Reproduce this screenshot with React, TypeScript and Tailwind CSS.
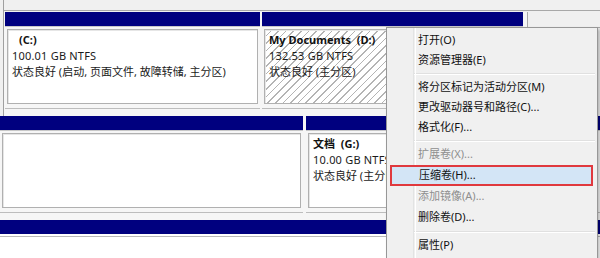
import React from 'react';

type Part = {
  width: string;
  label?: string;
  size?: string;
  status?: string;
  hatched?: boolean;
  labelIndent?: string;
};

function Partition({ width, label, size, status, hatched, labelIndent }: Part) {
  return (
    <div className={`${width} flex flex-col shrink-0`}>
      <div className="h-[14px] bg-[#00007f] border-b border-[#c8c8c8] box-content" />
      <div
        className={`mt-[2px] mx-[2px] h-[75px] border border-[#b0b0b0] shadow-[inset_1px_1px_0_#e6e6e6] pt-[2px] pl-[4px] leading-[16px] whitespace-pre overflow-hidden ${
          hatched
            ? 'bg-[repeating-linear-gradient(135deg,#ffffff_0px,#ffffff_4.3px,#b4b4b4_4.3px,#b4b4b4_5.4px)]'
            : 'bg-white'
        }`}
      >
        {label && <div className={`font-bold text-[#111] ${labelIndent ?? ''}`}>{label}</div>}
        {size && <div className="text-[#1a1a1a] tracking-[0.2px]">{size}</div>}
        {status && <div className="text-[#1a1a1a]">{status}</div>}
      </div>
      <div className="h-[4px]" />
      <div className="border-t border-[#bdbdbd]" />
    </div>
  );
}

const items: ({ text: string; disabled?: boolean; active?: boolean; h?: string } | 'sep')[] = [
  { text: '打开(O)' },
  { text: '资源管理器(E)' },
  'sep',
  { text: '将分区标记为活动分区(M)' },
  { text: '更改驱动器号和路径(C)...' },
  { text: '格式化(F)...' },
  'sep',
  { text: '扩展卷(X)...', disabled: true, h: 'h-[21px]' },
  { text: '压缩卷(H)...', active: true, h: 'h-[21px]' },
  { text: '添加镜像(A)...', disabled: true, h: 'h-[21px]' },
  { text: '删除卷(D)...', h: 'h-[21px]' },
  'sep',
  { text: '属性(P)' },
];

export default function App() {
  return (
    <div className="relative w-[600px] h-[258px] overflow-hidden bg-white text-[11px] font-['Noto_Sans','Noto_Sans_CJK_SC',sans-serif]">
      {/* top strip */}
      <div className="h-[12px] bg-[#f0f0f0] flex">
        <div className="w-[4px] border-r border-[#a0a0a0]" />
        <div className="flex-1 border-b border-[#a8a8a8] mb-[1px]" />
      </div>

      {/* disk row 1 */}
      <div className="h-[104px] flex bg-[#f6f6f6]">
        <div className="w-[4px] bg-[#f0f0f0] border-r border-[#a0a0a0] shrink-0" />
        <div className="w-[1px] shrink-0" />
        <Partition
          width="w-[255px]"
          label="(C:)"
          labelIndent="ml-[7px]"
          size="100.01 GB NTFS"
          status="状态良好 (启动, 页面文件, 故障转储, 主分区)"
        />
        <div className="w-[2px] shrink-0" />
        <Partition
          width="w-[261px]"
          label="My Documents  (D:)"
          size="132.53 GB NTFS"
          status="状态良好 (主分区)"
          hatched
        />
        <div className="flex-1 bg-[#f0f0f0] ml-[4px] border-l border-[#a8a8a8]">
          <div className="h-[16px] border-b border-[#a8a8a8]" />
        </div>
      </div>

      {/* disk row 2 */}
      <div className="h-[104px] flex bg-[#f6f6f6]">
        <Partition width="w-[303px]" />
        <div className="w-[3px] shrink-0" />
        <div className="flex-1 flex">
          <Partition
            width="w-full"
            label="文档  (G:)"
            size="10.00 GB NTFS"
            status="状态良好 (主分区)"
          />
        </div>
      </div>

      {/* disk row 3 */}
      <div className="flex flex-col">
        <div className="h-[14px] bg-[#00007f]" />
        <div className="mt-[2px] border-t border-[#b8b8b8]" />
      </div>

      {/* context menu */}
      <div className="absolute left-[386px] top-[27px] w-[212px] h-[240px] bg-[#f0f0f0] border border-[#979797] shadow-[2px_2px_3px_rgba(0,0,0,0.25)] pt-[2px]">
        <div className="absolute left-[26px] top-0 bottom-0 w-[2px] border-l border-[#e2e3e3] shadow-[1px_0_0_#ffffff]" />
        {items.map((it, i) =>
          it === 'sep' ? (
            <div key={i} className="h-[7px] flex items-center ml-[27px] mr-[2px]">
              <div className="w-full border-t border-[#e0e0e0] border-b border-b-white" />
            </div>
          ) : (
            <div
              key={i}
              className={`relative ${it.h ?? 'h-[20px]'} flex items-center whitespace-nowrap ${
                it.active
                  ? 'ml-[3px] mr-[4px] bg-[#d3e5f6] border-2 border-[#e0393e] pl-[27px]'
                  : 'pl-[31px]'
              } ${it.disabled ? 'text-[#8e8e8e]' : 'text-[#111]'}`}
            >
              {it.text}
            </div>
          )
        )}
      </div>
    </div>
  );
}
